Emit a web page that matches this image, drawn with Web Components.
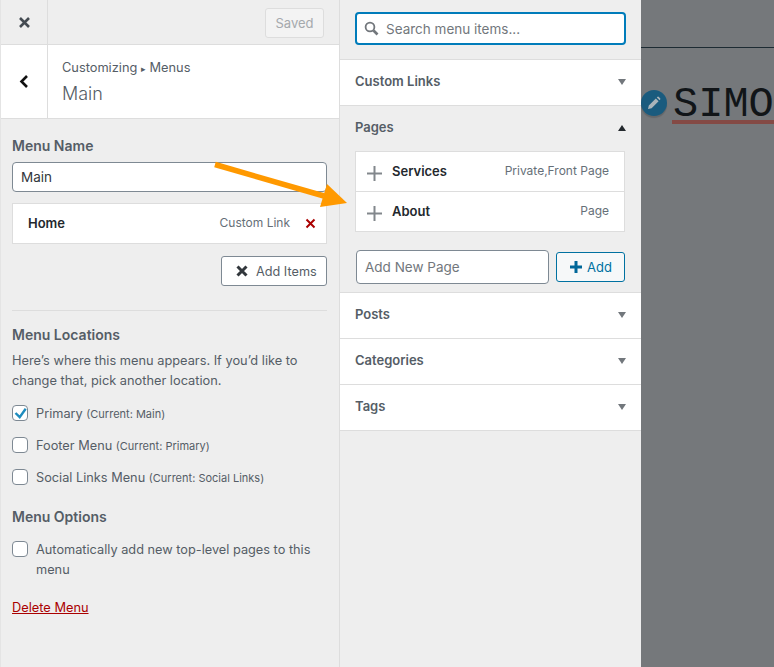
<!DOCTYPE html>
<html lang="en">
<head>
<meta charset="utf-8">
<title>Customizing Menus</title>
<style>
    html, body { margin: 0; height: 100%; overflow: hidden; }
    body { font-family: Inter, "Liberation Sans", sans-serif; font-size: 13px; color: #555d66; }
</style>
</head>
<body>
<customize-app>
    <menu-panel slot="left"></menu-panel>
    <items-panel slot="middle">
        <item-section title="Custom Links"></item-section>
        <item-section title="Pages" open>
            <page-row name="Services" kind="Private,Front Page"></page-row>
            <page-row name="About" kind="Page"></page-row>
        </item-section>
        <item-section title="Posts"></item-section>
        <item-section title="Categories"></item-section>
        <item-section title="Tags"></item-section>
    </items-panel>
    <site-preview slot="right"></site-preview>
</customize-app>

<script>
class CustomizeApp extends HTMLElement {
    connectedCallback() {
        this.attachShadow({ mode: 'open' });
        this.shadowRoot.innerHTML = `
            <style>
                :host {
                    display: grid;
                    grid-template-columns: 340px 301px 133px;
                    height: 667px;
                    position: relative;
                    overflow: hidden;
                }
                .arrow {
                    position: absolute;
                    left: 210px;
                    top: 155px;
                }
            </style>
            <slot name="left"></slot>
            <slot name="middle"></slot>
            <slot name="right"></slot>
            <svg class="arrow" width="140" height="60" viewBox="0 0 140 60">
                <path d="M5 9.5 L114 41" stroke="#ff9900" stroke-width="5.5" fill="none"/>
                <path d="M117 29 L137 48 L110 52 Z" fill="#ff9900"/>
            </svg>
        `;
    }
}

class MenuPanel extends HTMLElement {
    connectedCallback() {
        this.attachShadow({ mode: 'open' });
        this.shadowRoot.innerHTML = `
            <style>
                :host {
                    display: block;
                    background: #eee;
                    border-right: 1px solid #ddd;
                    border-left: 1px solid #e4e4e4;
                    box-sizing: border-box;
                    height: 667px;
                }
                .top {
                    display: flex;
                    justify-content: space-between;
                    align-items: center;
                    height: 44px;
                    border-bottom: 1px solid #ddd;
                    padding-right: 15px;
                }
                .square {
                    width: 46px;
                    align-self: stretch;
                    border-right: 1px solid #ddd;
                    display: flex;
                    align-items: center;
                    justify-content: center;
                }
                .saved {
                    box-sizing: border-box;
                    width: 59px;
                    height: 30px;
                    margin-top: 2px;
                    border: 1px solid #ddd;
                    border-radius: 3px;
                    background: #f3f3f3;
                    color: #a5a9ad;
                    font-size: 13px;
                    display: flex;
                    align-items: center;
                    justify-content: center;
                }
                .head {
                    display: flex;
                    height: 73px;
                    background: #fff;
                    border-bottom: 1px solid #ddd;
                }
                .titles {
                    padding: 14px 0 0 14px;
                }
                .crumb { font-size: 12.8px; line-height: 18px; color: #555d66; }
                .crumb span { font-size: 9px; }
                .title { font-size: 18px; font-weight: 300; line-height: 26px; margin-top: 3px; color: #555d66; }
                .body { padding: 0 12px 0 11px; }
                h3 {
                    margin: 0;
                    font-size: 14px;
                    line-height: 18px;
                    font-weight: 600;
                    color: #555d66;
                }
                .name-label { padding-top: 18px; }
                .name {
                    box-sizing: border-box;
                    height: 30px;
                    margin-top: 7px;
                    padding: 0 8px;
                    line-height: 28px;
                    border: 1px solid #7e8993;
                    border-radius: 4px;
                    background: #fff;
                    font-size: 13.5px;
                    color: #32373c;
                }
                .item {
                    box-sizing: border-box;
                    height: 41px;
                    margin-top: 11px;
                    padding: 0 10px 2px 15px;
                    display: flex;
                    align-items: center;
                    background: #fff;
                    border: 1px solid #ddd;
                }
                .item b { font-weight: 600; color: #23282d; flex: 1; font-size: 13px; }
                .item span { font-size: 12px; color: #666f78; margin-right: 15px; }
                .item svg { display: block; margin-top: 2px; }
                .actions {
                    display: flex;
                    justify-content: flex-end;
                    margin-top: 12px;
                    padding-bottom: 24px;
                    border-bottom: 1px solid #ddd;
                }
                .add-items {
                    box-sizing: border-box;
                    width: 106px;
                    height: 30px;
                    border: 1px solid #7e8993;
                    border-radius: 3px;
                    background: #fff;
                    display: flex;
                    align-items: center;
                    gap: 8px;
                    padding-left: 14px;
                    font-size: 12.7px;
                    color: #555d66;
                }
                .locations { padding-top: 15px; }
                p { margin: 7px 0 0; font-size: 12.8px; line-height: 19.5px; color: #555d66; }
                .checks { display: flex; flex-direction: column; gap: 12px; margin-top: 14px; }
                .options { padding-top: 20px; }
                .options check-row { margin-top: 14px; }
                .delete {
                    display: inline-block;
                    margin-top: 20px;
                    color: #a00;
                    text-decoration: underline;
                    font-size: 12.8px;
                }
            </style>
            <div class="top">
                <div class="square">
                    <svg width="13" height="13" viewBox="0 0 13 13"><path d="M2 2 L11 11 M11 2 L2 11" stroke="#444b52" stroke-width="2.6"/></svg>
                </div>
                <div class="saved">Saved</div>
            </div>
            <div class="head">
                <div class="square">
                    <svg width="10" height="15" viewBox="0 0 10 15"><path d="M8 2 L2.5 7.5 L8 13" stroke="#111" stroke-width="2.6" fill="none"/></svg>
                </div>
                <div class="titles">
                    <div class="crumb">Customizing <span>&#9656;</span> Menus</div>
                    <div class="title">Main</div>
                </div>
            </div>
            <div class="body">
                <h3 class="name-label">Menu Name</h3>
                <div class="name">Main</div>
                <div class="item">
                    <b>Home</b>
                    <span>Custom Link</span>
                    <svg width="11" height="11" viewBox="0 0 11 11"><path d="M1.5 1.5 L9.5 9.5 M9.5 1.5 L1.5 9.5" stroke="#a00" stroke-width="2"/></svg>
                </div>
                <div class="actions">
                    <div class="add-items">
                        <svg width="12" height="12" viewBox="0 0 12 12"><path d="M1.5 1.5 L10.5 10.5 M10.5 1.5 L1.5 10.5" stroke="#32373c" stroke-width="3"/></svg>
                        Add Items
                    </div>
                </div>
                <div class="locations">
                    <h3>Menu Locations</h3>
                    <p>Here&rsquo;s where this menu appears. If you&rsquo;d like to change that, pick another location.</p>
                    <div class="checks">
                        <check-row checked>Primary <small>(Current: Main)</small></check-row>
                        <check-row>Footer Menu <small>(Current: Primary)</small></check-row>
                        <check-row>Social Links Menu <small>(Current: Social Links)</small></check-row>
                    </div>
                </div>
                <div class="options">
                    <h3>Menu Options</h3>
                    <check-row>Automatically add new top-level pages to this menu</check-row>
                </div>
                <a class="delete">Delete Menu</a>
            </div>
        `;
    }
}

class CheckRow extends HTMLElement {
    connectedCallback() {
        this.attachShadow({ mode: 'open' });
        const tick = this.hasAttribute('checked')
            ? '<svg width="16" height="16" viewBox="0 0 16 16"><path d="M3.5 8 L7.7 12.2 L13.7 3.8" stroke="#1e8cbe" stroke-width="2.4" fill="none"/></svg>'
            : '';
        this.shadowRoot.innerHTML = `
            <style>
                :host {
                    display: flex;
                    gap: 8px;
                    font-size: 12.75px;
                    line-height: 20px;
                    color: #555d66;
                }
                .box {
                    box-sizing: border-box;
                    flex: none;
                    width: 16px;
                    height: 16px;
                    margin-top: 1px;
                    border: 1px solid #7e8993;
                    border-radius: 4px;
                    background: #fff;
                }
                .box svg { display: block; margin: -1px; }
                ::slotted(small) { font-size: 11px; line-height: 1; }
            </style>
            <div class="box">${tick}</div>
            <div><slot></slot></div>
        `;
    }
}

class ItemsPanel extends HTMLElement {
    connectedCallback() {
        this.attachShadow({ mode: 'open' });
        this.shadowRoot.innerHTML = `
            <style>
                :host {
                    display: block;
                    background: #eee;
                    height: 667px;
                }
                .search-wrap { padding: 12px 15px 14px; border-bottom: 1px solid #ddd; }
                .search {
                    box-sizing: border-box;
                    height: 33px;
                    border: 2px solid #007cba;
                    border-radius: 4px;
                    background: #fff;
                    display: flex;
                    align-items: center;
                    gap: 7px;
                    padding-left: 7px;
                    font-size: 13.5px;
                    color: #72777c;
                }
            </style>
            <div class="search-wrap">
                <div class="search">
                    <svg width="15" height="15" viewBox="0 0 15 15"><circle cx="6" cy="6" r="4.4" stroke="#72777c" stroke-width="1.8" fill="none"/><path d="M9.5 9.5 L13.5 13.5" stroke="#72777c" stroke-width="2.6"/></svg>
                    Search menu items...
                </div>
            </div>
            <slot></slot>
        `;
    }
}

class ItemSection extends HTMLElement {
    connectedCallback() {
        this.attachShadow({ mode: 'open' });
        const open = this.hasAttribute('open');
        this.shadowRoot.innerHTML = `
            <style>
                :host { display: block; }
                .bar {
                    box-sizing: border-box;
                    height: 46px;
                    padding: 0 15px 4px 15px;
                    display: flex;
                    align-items: center;
                    justify-content: space-between;
                    background: ${open ? '#eee' : '#fff'};
                    border-bottom: ${open ? '0' : '1px solid #ddd'};
                    font-size: 13px;
                    font-weight: 600;
                    color: #555d66;
                }
                .tri { width: 8px; height: 6px; display: block; margin-top: 2px; }
                .list { margin: -1px 16px 0 15px; border: 1px solid #ddd; border-bottom: 0; }
                .new {
                    display: flex;
                    align-items: center;
                    gap: 7px;
                    padding: 18px 16px 8px 16px;
                    border-bottom: 1px solid #ddd;
                }
                .new-input {
                    box-sizing: border-box;
                    flex: 1;
                    height: 34px;
                    line-height: 32px;
                    padding-left: 8px;
                    border: 1px solid #7e8993;
                    border-radius: 4px;
                    background: #fff;
                    font-size: 13.5px;
                    color: #72777c;
                }
                .new-add {
                    box-sizing: border-box;
                    width: 69px;
                    height: 30px;
                    border: 1px solid #0071a1;
                    border-radius: 3px;
                    background: #f6f8f9;
                    color: #0071a1;
                    display: flex;
                    align-items: center;
                    justify-content: center;
                    gap: 4px;
                    font-size: 13px;
                }
            </style>
            <div class="bar">
                <span>${this.getAttribute('title')}</span>
                <svg class="tri" viewBox="0 0 8 6"><path d="${open ? 'M0 6 L4 0 L8 6 Z' : 'M0 0 L8 0 L4 6 Z'}" fill="${open ? '#23282d' : '#72777c'}"/></svg>
            </div>
            ${open ? `
                <div class="list"><slot></slot></div>
                <div class="new">
                    <div class="new-input">Add New Page</div>
                    <div class="new-add">
                        <svg width="14" height="14" viewBox="0 0 14 14"><path d="M7 1 V13 M1 7 H13" stroke="#006799" stroke-width="3"/></svg>
                        Add
                    </div>
                </div>
            ` : ''}
        `;
    }
}

class PageRow extends HTMLElement {
    connectedCallback() {
        this.attachShadow({ mode: 'open' });
        this.shadowRoot.innerHTML = `
            <style>
                :host {
                    display: flex;
                    align-items: center;
                    box-sizing: border-box;
                    height: 40px;
                    padding: 0 15px 2px 11px;
                    background: #fff;
                    border-bottom: 1px solid #ddd;
                    font-size: 12px;
                    color: #666f78;
                }
                svg { display: block; margin: 6px 10px 0 0; }
                b { flex: 1; font-size: 13px; font-weight: 600; color: #23282d; }
            </style>
            <svg width="15" height="15" viewBox="0 0 15 15"><path d="M7.5 0 V15 M0 7.5 H15" stroke="#82878c" stroke-width="2"/></svg>
            <b>${this.getAttribute('name')}</b>
            <span>${this.getAttribute('kind')}</span>
        `;
    }
}

class SitePreview extends HTMLElement {
    connectedCallback() {
        this.attachShadow({ mode: 'open' });
        this.shadowRoot.innerHTML = `
            <style>
                :host {
                    display: block;
                    height: 667px;
                    background: #75787b;
                    overflow: hidden;
                    position: relative;
                }
                .rule { height: 47px; border-bottom: 1px solid #1d2b33; }
                .logo {
                    margin: 42px 0 0 31px;
                    padding-left: 1px;
                    font-family: "Liberation Mono", monospace;
                    font-size: 42px;
                    line-height: 30px;
                    color: #111518;
                    white-space: nowrap;
                    border-bottom: 4px solid #844a45;
                }
                .pencil {
                    position: absolute;
                    left: 0;
                    top: 90px;
                    width: 26px;
                    height: 26px;
                    border-radius: 50%;
                    background: #1a5b7e;
                    box-shadow: 0 2px 1px rgba(0,0,0,.15);
                    display: flex;
                    align-items: center;
                    justify-content: center;
                }
            </style>
            <div class="rule"></div>
            <div class="logo">SIMO</div>
            <div class="pencil">
                <svg width="14" height="14" viewBox="0 0 14 14"><path d="M1 13 L1.8 9.4 L8.8 2.4 L11.6 5.2 L4.6 12.2 Z M9.8 1.4 L10.6 .8 Q11.2 .4 11.8 .9 L13.1 2.2 Q13.6 2.8 13.2 3.4 L12.6 4.2 Z" fill="#aab4ba"/></svg>
            </div>
        `;
    }
}

customElements.define('customize-app', CustomizeApp);
customElements.define('menu-panel', MenuPanel);
customElements.define('check-row', CheckRow);
customElements.define('items-panel', ItemsPanel);
customElements.define('item-section', ItemSection);
customElements.define('page-row', PageRow);
customElements.define('site-preview', SitePreview);
</script>
</body>
</html>
